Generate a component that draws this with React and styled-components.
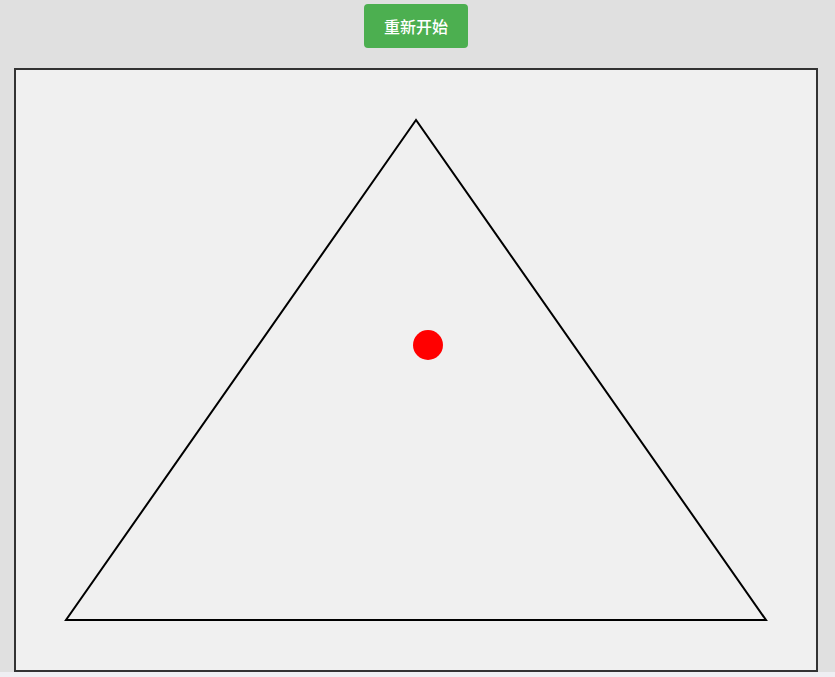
import React from "react";
import styled, { createGlobalStyle } from "styled-components";

const GlobalStyle = createGlobalStyle`
  html, body {
    margin: 0;
    padding: 0;
    background: #efeff3;
    font-family: "Noto Sans CJK SC", "Liberation Sans", sans-serif;
  }
`;

const Page = styled.div`
  background: #e0e0e0;
  padding: 4px 0 0 14px;
  width: 821px;
`;

const Column = styled.div`
  width: 804px;
  display: flex;
  flex-direction: column;
  align-items: center;
  gap: 20px;
`;

const Button = styled.button`
  width: 104px;
  height: 44px;
  border: none;
  border-radius: 4px;
  background: #4caf50;
  color: #fff;
  font-family: "Noto Sans CJK SC", sans-serif;
  font-size: 16px;
  font-weight: 500;
  cursor: pointer;
`;

const Board = styled.div`
  width: 800px;
  height: 600px;
  border: 2px solid #333;
  background: #f0f0f0;
  display: block;
  & svg {
    display: block;
  }
`;

const vertices = [
  [400, 50],
  [50, 550],
  [750, 550],
];

export default function App() {
  const points = vertices.map((p) => p.join(",")).join(" ");
  return (
    <>
      <GlobalStyle />
      <Page>
        <Column>
          <Button>重新开始</Button>
          <Board>
            <svg width="800" height="600" viewBox="0 0 800 600">
              <polygon points={points} fill="none" stroke="#000" strokeWidth="2" />
              <circle cx="412" cy="275" r="15" fill="#ff0000" />
            </svg>
          </Board>
        </Column>
      </Page>
    </>
  );
}
